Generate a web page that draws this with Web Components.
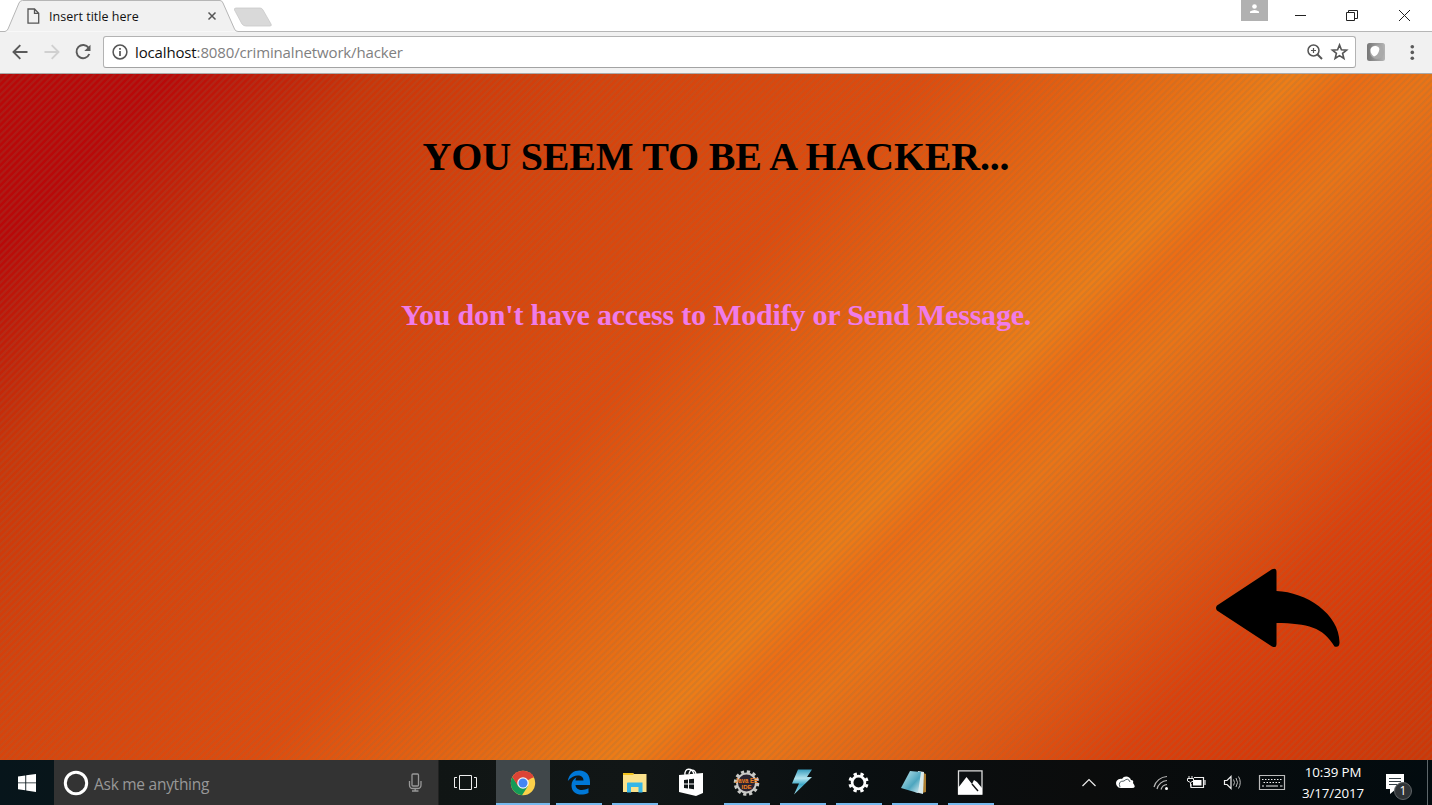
<!DOCTYPE html>
<html lang="en">
<head>
<meta charset="utf-8">
<title>Insert title here</title>
<style>
html,body{margin:0;height:100%;overflow:hidden}
body{font-family:"Open Sans","Noto Sans",sans-serif}
</style>
</head>
<body>
<desktop-screen></desktop-screen>
<script>
function define(name, css, html) {
  const template = document.createElement('template');
  template.innerHTML = `<style>*{box-sizing:border-box}svg{display:block;overflow:visible}${css}</style>${html}`;
  customElements.define(name, class extends HTMLElement {
    constructor() {
      super();
      this.attachShadow({ mode: 'open' }).append(template.content.cloneNode(true));
    }
  });
}

define('tab-strip', `
:host{display:flex;height:32px;background:#fff;position:relative;width:1432px}
.shape{position:absolute;left:0;top:0}
.tab{display:flex;align-items:center;width:234px;padding:0 18px 0 27px;position:relative;height:32px}
.title{font-size:12.5px;line-height:16px;color:#111;margin-left:9px;flex:1;white-space:nowrap;letter-spacing:.03px;padding-top:1px}
.controls{position:relative;margin-left:auto}
`, `
<svg class="shape" width="1432" height="32"><path d="M0 31.5H5Q7 31 8 29L19 3Q20 .5 22.500 .5H220Q222 .5 223 3L234.500 29Q235.500 31.500 238 31.500H1432" fill="#f1f1f1" stroke="#b6b6b6"/><path d="M236 8H260Q262 8 263 10L271 24Q272 26 270 26H246Q243.500 26 242 24L234.500 10Q234 8 236 8Z" fill="#d9d9d9" stroke="#c9c9c9" stroke-width=".8"/></svg>
<div class="tab">
<svg width="13" height="16" viewBox="0 0 13 16" fill="none" stroke="#555" stroke-width="1.300"><path d="M1 1H7.500L11.700 5.200V15.200H1ZM7.500 1V5.300H11.700"/></svg>
<span class="title">Insert title here</span>
<svg width="8" height="8" viewBox="0 0 8 8" stroke="#555" stroke-width="1.500"><path d="M.5 .5L7.500 7.500M7.500 .5L.5 7.500"/></svg>
</div>
<svg class="controls" width="191" height="32" viewBox="1241 0 191 32" fill="none" stroke="#222">
<path d="M1241 0H1268V21H1241Z" fill="#b1b1b1" stroke="none"/><circle cx="1254.500" cy="6.500" r="2.300" fill="#fff" stroke="none"/><path d="M1250 13V11.500Q1254.500 8.500 1259 11.500V13Z" fill="#fff" stroke="none"/>
<path d="M1295 15.500H1306"/><path d="M1346.500 12.500H1354.500V20.500H1346.500ZM1348.500 12V10.500H1357.500V18.500H1355"/><path d="M1399 10L1410 21M1410 10L1399 21"/>
</svg>`);

define('tool-bar', `
:host{display:flex;align-items:center;height:42px;background:#f1f1f1;border-bottom:1px solid #aaa;padding:0 0 1px}
.nav{flex:none}
.field{display:flex;align-items:center;width:1253px;height:32px;background:#fff;border:1px solid #b3b3b3;border-bottom-color:#a3a3a3;border-radius:3px;padding:0 7px 0 8px}
.url{flex:1;margin-left:7px;font-size:15px;line-height:20px;color:#808080;white-space:nowrap;letter-spacing:-.14px}
b{font-weight:400;color:#111}
`, `
<svg class="nav" width="103" height="40" viewBox="0 32 103 40" fill="none" stroke="#5a5a5a" stroke-width="1.900"><path d="M27.500 52H14M20.300 45.200L13.500 52L20.300 58.800"/><path stroke="#d0d0d0" d="M44.500 52H58M51.700 45.200L58.500 52L51.700 58.800"/><path d="M88.600 47.800A6.600 6.600 0 1 0 89.300 54"/><path d="M90.500 44.800V51H84.300Z" fill="#5a5a5a" stroke="none"/></svg>
<div class="field">
<svg width="16" height="16" viewBox="0 0 16 16" fill="none" stroke="#555"><circle cx="8" cy="8" r="6.900" stroke-width="1.500"/><path d="M8 7V12M8 4V5.700" stroke-width="1.700"/></svg>
<span class="url"><b>localhost</b>:8080/criminalnetwork/hacker</span>
<svg width="42" height="18" viewBox="0 0 42 18" fill="none" stroke="#555" stroke-width="1.500"><circle cx="7.500" cy="7.500" r="5.500"/><path d="M11.500 11.500L16 16" stroke-width="2"/><path d="M5 7.500H10M7.500 5V10" stroke-width="1.200"/><path d="M33.500 1.900L35.400 6.700L40.600 7.100L36.600 10.400L37.900 15.500L33.500 12.700L29.100 15.500L30.400 10.400L26.400 7.100L31.600 6.700Z" stroke-width="1.600"/></svg>
</div>
<svg width="76" height="40" viewBox="1356 32 76 40"><defs><linearGradient id="g"><stop stop-color="#777"/><stop offset="1" stop-color="#b5b5b5"/></linearGradient></defs><rect x="1367" y="43" width="18" height="18" rx="2.500" fill="url(#g)"/><circle cx="1377" cy="52" r="7" fill="#aaa"/><path d="M1370.500 49Q1372 45.500 1376 46Q1380.500 47 1379 51Q1377.500 55.500 1374 56.500Q1370 54 1370.500 49Z" fill="#fff"/><g fill="#5a5a5a"><circle cx="1412.300" cy="46.700" r="1.800"/><circle cx="1412.300" cy="52.400" r="1.800"/><circle cx="1412.300" cy="58.200" r="1.800"/></g></svg>`);

define('hacker-page', `
:host{display:flex;flex-direction:column;align-items:center;flex:1;min-height:0;font-family:"Liberation Serif","Times New Roman",serif;
background:repeating-linear-gradient(135deg,rgba(120,115,90,.18) 0 1.200px,rgba(120,115,90,0) 2.300px 3.800px,rgba(120,115,90,.18) 4.750px),
linear-gradient(134.500deg,#b80808 0,#b90808 8%,#cb3508 18%,#d7420b 29%,#df4b0d 44%,#e66110 52%,#ed7d17 61.600%,#ed6b13 64.500%,#eb7416 68%,#e25912 77.500%,#dc400b 85%,#d83908 91%,#cd3707 100%)}
h1{margin:59px 0 0;font-size:40px;line-height:48px;color:#000;white-space:nowrap;letter-spacing:-.2px}
h2{margin:116px 0 0;font-size:30px;line-height:36px;color:#f07ce9;white-space:nowrap;letter-spacing:-.21px}
a{align-self:flex-end;margin:235px 91px 0 0;width:126px}
`, `
<h1>YOU SEEM TO BE A HACKER...</h1>
<h2>You don't have access to Modify or Send Message.</h2>
<a><svg width="126" height="80" viewBox="1215 568 126 80"><path d="M1217 605.500L1272 569.300Q1276.500 567.500 1276.500 572V591C1306 592 1340 614 1339.500 643Q1339 648 1334.500 646.500C1323 627 1308 623.500 1276.500 623V644Q1276.500 648.500 1272 646.500L1217 610.500Q1215 608 1217 605.500Z"/></svg></a>`);

define('app-button', `
:host{display:flex;justify-content:center;align-items:flex-start;width:56px;height:45px;padding-top:8px;position:relative}
:host([running])::after{content:"";position:absolute;left:5px;right:5px;bottom:0;height:2px;background:#76b9ed}
:host([active]){background:#40474a;width:54px;margin:0 1px}
:host([active])::after{left:0;right:0}
`, `<slot></slot>`);

define('task-bar', `
:host{display:flex;height:45px;background:linear-gradient(90deg,#07151b,#101514 30%,#111616 45%,#0a0f11 60%,#0b0c0c 76%,#020b0f);color:#fff}
.start{width:54px;padding:14px 0 0 18px}
.search{display:flex;align-items:center;width:385px;background:#333;padding:0 16px 0 9px;color:#989898;font-size:15.500px;border-right:1px solid #222}
.search span{flex:1;margin-left:5px;padding-top:2px;letter-spacing:-.27px;white-space:nowrap}
.view{width:56px;padding:15px 0 0 15px}
.tray{margin-left:auto;display:flex}
.clock{width:66px;font-size:13.300px;line-height:21px;text-align:center;padding-top:2px;white-space:nowrap;letter-spacing:-.1px}
.clock div{margin:0 -2px}
.note{position:relative;width:60px}
.count{position:absolute;left:28px;top:22px;width:18px;height:18px;border-radius:50%;background:#303437;border:1px solid #606568;font-size:12px;line-height:16px;text-align:center}
`, `
<div class="start"><svg width="18" height="18" viewBox="0 0 18 18" fill="#fff"><path d="M0 2.500L7.300 1.500V8.500H0ZM8.200 1.300L18 0V8.500H8.200ZM0 9.300H7.300V16.300L0 15.300ZM8.200 9.300H18V18L8.200 16.500Z"/></svg></div>
<div class="search"><svg width="26" height="26"><circle cx="13" cy="13" r="10.700" fill="none" stroke="#fff" stroke-width="3"/></svg><span>Ask me anything</span><svg width="14" height="19" viewBox="0 0 14 19" fill="none" stroke="#999" stroke-width="1.300"><rect x="4" y="1" width="6.500" height="12" rx="1"/><path d="M1.500 8V12Q1.500 15.500 5 15.500H9.500Q13 15.500 13 12V8M7.200 15.500V18M4 18H10.500"/></svg></div>
<div class="view"><svg width="24" height="16" viewBox="0 0 24 16" fill="none" stroke="#eee"><path d="M5.500 .5H17.500V14.500H5.500ZM3 2.500H.5V12.500H3M20 2.500H22.500V12.500H20"/></svg></div>
<app-button active running><svg width="28" height="30" viewBox="0 0 28 30"><circle cx="14" cy="15" r="12.200" fill="#fbd04a"/><path d="M14 15L3.400 9A12.200 12.200 0 0 1 24.600 9Z" fill="#db4437"/><path d="M3.400 9A12.200 12.200 0 0 0 13 27.200L19 18L9 17Z" fill="#149b58"/><path d="M3.400 9L9 18L14 9.500H24.800L23 6L14 3Z" fill="#db4437"/><circle cx="14" cy="15" r="5.800" fill="#f4f4f4"/><circle cx="14" cy="15" r="4.500" fill="#4285f4"/></svg></app-button>
<app-button running><svg width="24" height="28" viewBox="0 0 24 28"><path d="M.8 13C2 5.500 7 2.500 12.500 2.500C19.500 2.500 23 7.500 23 14V17H8.500C9 22 15 23.500 21.500 20.300V25C13 28.500 4.500 26 4.500 17.500C4.500 13.500 6.500 10.800 9.500 9.200Q8.600 10.700 8.500 12.500H16.500C16.500 6 7 5.500 .8 13Z" fill="#0078d7"/></svg></app-button>
<app-button running><svg width="24" height="28" viewBox="0 0 24 28"><path d="M0 5.500Q0 5 .5 5H9.500L11 6H23.500V24H0Z" fill="#fbe28c"/><path d="M0 5H10.500V7H0Z" fill="#f2c31c"/><path d="M4 15Q4 14.500 5 14.500H19.500V24.500H15.500V19H8V24.500H4Z" fill="#35b6e8"/></svg></app-button>
<app-button><svg width="26" height="30" viewBox="0 0 26 30"><path d="M7 7C6 -.5 14 -.5 16 6M11 6C12 .5 17 1 18 6" fill="none" stroke="#fff" stroke-width="1.300"/><path d="M1 7L25 5V25L18 28L1 24Z" fill="#fff"/><path d="M6 12L10 11.500V15.500H6ZM11 11.300L16 10.800V15.500H11ZM6 16.500H10V20.500L6 20ZM11 16.500H16V21.200L11 20.600Z" fill="#101718"/></svg></app-button>
<app-button running><svg width="26" height="30" viewBox="0.500 0 26 30"><circle cx="13" cy="15" r="11.300" fill="none" stroke="#c9c9c6" stroke-width="3" stroke-dasharray="3.200 2.717"/><circle cx="13" cy="15" r="9.500" fill="#292330" stroke="#c9c9c6" stroke-width="2"/><text x="13" y="14.500" text-anchor="middle" textLength="23" lengthAdjust="spacingAndGlyphs" font-family="Liberation Sans" font-weight="700" font-size="6.500" fill="#f08020">Java EE</text><text x="13" y="20.500" text-anchor="middle" font-family="Liberation Sans" font-weight="700" font-size="6" fill="#f08020">IDE</text></svg></app-button>
<app-button running><svg width="22" height="28" viewBox="0 0 22 28"><defs><linearGradient id="b" x2="0" y2="1"><stop stop-color="#3a9dbd"/><stop offset=".35" stop-color="#b2e4ee"/><stop offset=".6" stop-color="#3fa8c8"/><stop offset="1" stop-color="#9fddea"/></linearGradient></defs><path d="M6 1.500H20L15 9H20L2 26.500L7 15.500H0Z" fill="url(#b)"/></svg></app-button>
<app-button running><svg width="22" height="28" viewBox="0 0 22 28"><circle cx="10.500" cy="14.500" r="6.400" fill="none" stroke="#fff" stroke-width="2.700"/><circle cx="10.500" cy="14.500" r="8.700" fill="none" stroke="#fff" stroke-width="2.900" stroke-dasharray="3.300 3.533" transform="rotate(11 10.500 14.500)"/></svg></app-button>
<app-button running><svg width="26" height="28" viewBox="1 0 26 28"><defs><linearGradient id="n" x2="1" y2="1"><stop stop-color="#c4eaf0"/><stop offset=".6" stop-color="#4da6bf"/><stop offset="1" stop-color="#e0f0f3"/></linearGradient></defs><path d="M20 4L25 6V24L21 25Z" fill="#ab7d31"/><path d="M17 3L23 4L22 26L14 24Z" fill="#d9eaed"/><path d="M9 3L20 4L17 25L0 20Z" fill="url(#n)"/></svg></app-button>
<app-button running><svg width="26" height="28" viewBox="1 0 26 28"><path d="M1.500 2.800H25V26H1.500Z" fill="#0c1012" stroke="#ddd" stroke-width="1.300"/><path d="M1 20L9.500 9L15 16L17 12L20 14L25 20V26.500H1Z" fill="#fff"/><path d="M15 16L21 23" stroke="#111" stroke-width="1.400"/></svg></app-button>
<div class="tray">
<svg width="220" height="45" viewBox="1080 760 220 45" fill="none" stroke="#eee" stroke-width="1.200">
<path d="M1082.500 786L1089 779.500L1095.500 786"/>
<path d="M1117 786C1114 781 1119 778 1122 779C1124 775 1130 776 1131 780Q1134 780 1133 783Q1137 788 1132 788H1121Q1118 788 1117 786Z" fill="#fff" stroke="none"/><path d="M1120 787Q1117.500 781 1124 781Q1128 777 1130 782" stroke="#26333a" stroke-width=".8"/>
<path d="M1154 787A14 14 0 0 1 1167 776.500M1157 789A11 11 0 0 1 1167 780.500M1161 789.500A7 7 0 0 1 1167 784.500" stroke="#bbb"/><circle cx="1166.500" cy="788.500" r="1.500" fill="#fff" stroke="none"/>
<path d="M1194 777.500H1203.500V787.500H1191V784M1205 780V785"/><path d="M1193 780H1201.500V785.500H1193Z" fill="#fff" stroke="none"/><path d="M1187.500 778.500H1193.500V781Q1190.500 784 1187.500 781ZM1189 776V779M1192 776V779M1190.500 783V786.500" stroke-width="1"/>
<path d="M1224.500 780.500H1227L1231 776.500V788.500L1227 784.500H1224.500Z"/><path d="M1233.500 779.500Q1235.500 782.500 1233.500 785.500M1236 778Q1239 782.500 1236 787M1238.500 776.500Q1242 782.500 1238.500 788.500" stroke="#bbb" stroke-width="1"/>
<path d="M1259.500 775.500H1284.500V789.500H1259.500Z" stroke="#bbb"/><path d="M1262 779.500H1282.500M1263.500 782.500H1281" stroke-dasharray="1.500 1.500"/><path d="M1262 786H1264M1266 786H1278M1280 786H1282.500"/>
</svg>
<div class="clock"><div>10:39 PM</div><div>3/17/2017</div></div>
<div class="note"><svg width="60" height="45" viewBox="0 0 60 45"><path d="M20 14H38V29H30L24 34V29H20Z" fill="#fff"/><path d="M23 18.500H35M23 21.500H35M23 24.500H31" stroke="#354045"/></svg><span class="count">1</span></div>
<svg width="6" height="45"><path d="M1.500 0V45" stroke="#5d666a"/></svg>
</div>`);

define('desktop-screen', `
:host{display:flex;flex-direction:column;width:1432px;height:805px;overflow:hidden}
`, `<tab-strip></tab-strip><tool-bar></tool-bar><hacker-page></hacker-page><task-bar></task-bar>`);
</script>
</body>
</html>
